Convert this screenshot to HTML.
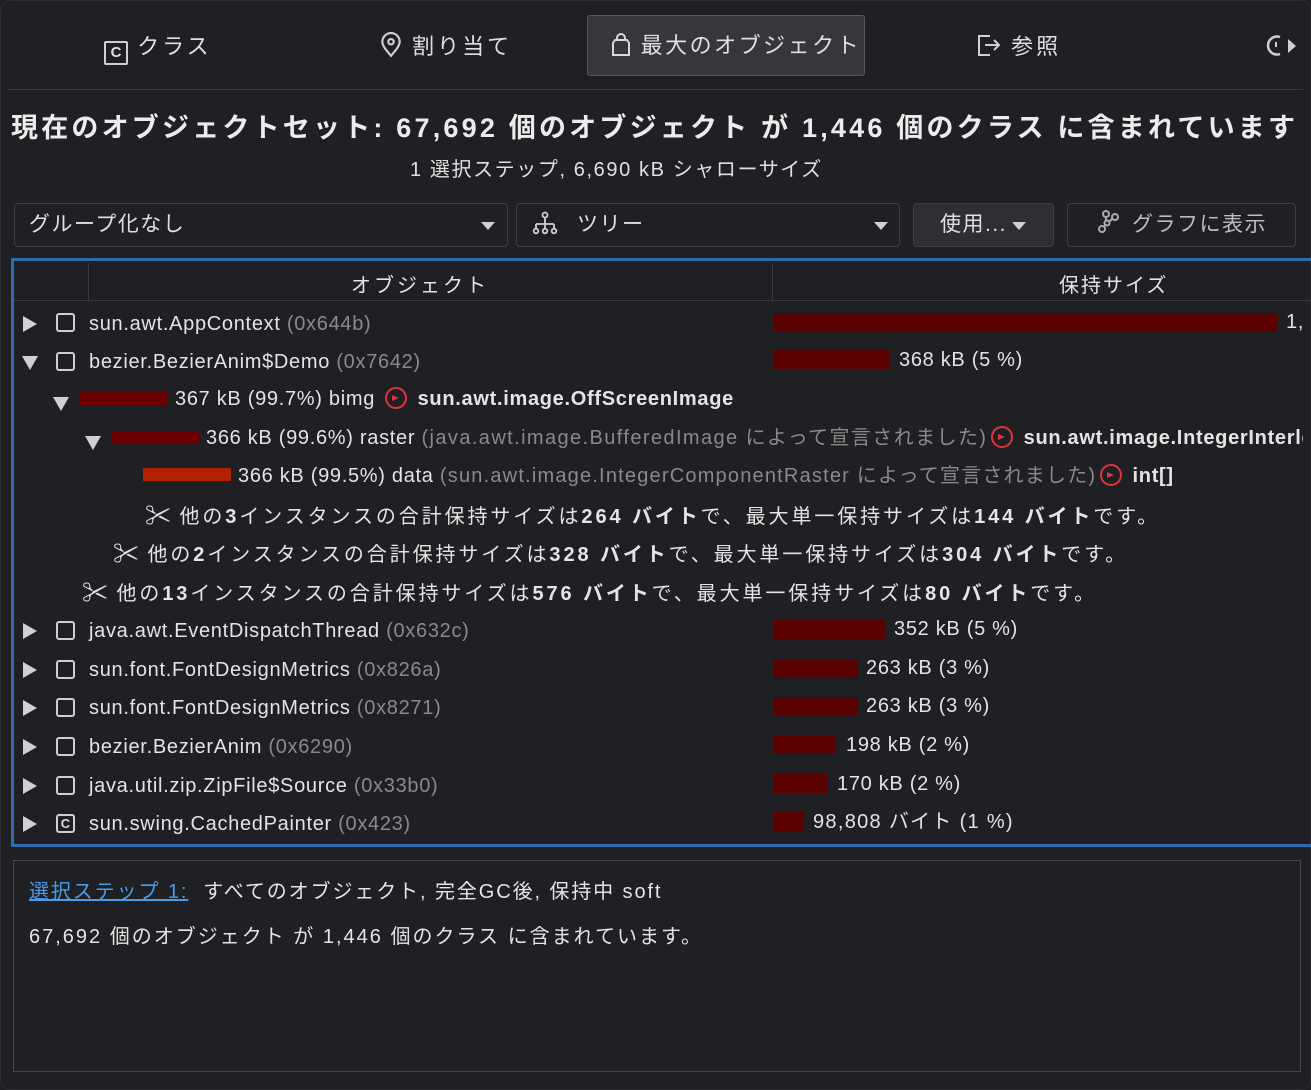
<!DOCTYPE html>
<html><head><meta charset="utf-8"><style>
body{margin:0;width:1311px;height:1090px;background:#1f2023;color:#e4e4e4;font-family:"Liberation Sans","Noto Sans CJK JP",sans-serif;overflow:hidden;position:relative}
.a{position:absolute;white-space:nowrap}
.r{position:absolute;height:38px;line-height:38px;font-size:20px;white-space:nowrap;letter-spacing:0.7px}
.s{letter-spacing:2.9px}
.g{color:#8a8a8a}
.b{font-weight:bold}
.bar{position:absolute;height:19px;background:#5c0000}
.tri{display:inline-block;width:0;height:0}
.cb{position:absolute;width:19px;height:19px;border:2px solid #cfcfcf;border-radius:3px;box-sizing:border-box}
.arr{display:inline-block;width:22px;height:22px;border:2.5px solid #e0343a;border-radius:50%;box-sizing:border-box;vertical-align:-4px;position:relative;margin:0 4px}
.arr:after{content:"";position:absolute;left:5px;top:6px;width:0;height:0;border-left:7px solid #e0343a;border-top:3.5px solid transparent;border-bottom:3.5px solid transparent}
.tab{position:absolute;top:16px;height:62px;line-height:62px;font-size:22px;color:#e0e0e0;letter-spacing:3px}
.btn{position:absolute;top:203px;height:44px;border:1.5px solid #3e3f43;border-radius:4px;box-sizing:border-box;font-size:21px;line-height:41px;color:#e0e0e0;letter-spacing:1.5px}
.dd{position:absolute;top:18px;border-left:7px solid transparent;border-right:7px solid transparent;border-top:8px solid #d0d0d0}
.sc{font-size:26px;vertical-align:-2px;letter-spacing:0}
</style></head><body>
<div class="a" style="left:0;top:0;width:1311px;height:1090px;border:1px solid #2c2d31;border-radius:10px;box-sizing:border-box"></div>
<div class="tab" style="left:104px"><span style="display:inline-block;width:24px;height:24px;border:2px solid #d0d0d0;box-sizing:border-box;font-size:15px;line-height:20px;text-align:center;vertical-align:-3px;font-weight:bold;border-radius:2px;letter-spacing:0">C</span> クラス</div>
<div class="tab" style="left:379px"><svg width="24" height="26" viewBox="0 0 22 24" style="vertical-align:-4px"><path d="M11 22C5 15 3 12 3 9a8 8 0 0 1 16 0c0 3-2 6-8 13z" fill="none" stroke="#d0d0d0" stroke-width="2"/><circle cx="11" cy="9" r="2.5" fill="none" stroke="#d0d0d0" stroke-width="2"/></svg> 割り当て</div>
<div class="a" style="left:587px;top:15px;width:278px;height:61px;background:#36373b;border:1.5px solid #55565a;border-radius:3px;box-sizing:border-box"></div>
<div class="tab" style="left:610px;top:15px;letter-spacing:2.5px"><svg width="22" height="24" viewBox="0 0 22 24" style="vertical-align:-4px"><path d="M3 22V10l2-3h12l2 3v12z M7 7V5a4 4 0 0 1 8 0v2" fill="none" stroke="#d8d8d8" stroke-width="2"/></svg> 最大のオブジェクト</div>
<div class="tab" style="left:976px"><svg width="26" height="26" viewBox="0 0 26 24" style="vertical-align:-4px"><path d="M14 3H3v19h11 M9 12h14 M18 7l5 5-5 5" fill="none" stroke="#d0d0d0" stroke-width="2"/></svg> 参照</div>
<div class="tab" style="left:1262px"><svg width="36" height="26" viewBox="0 0 36 24" style="vertical-align:-4px"><path d="M18 4a9 9 0 1 0 0 17" fill="none" stroke="#d0d0d0" stroke-width="2.5"/><path d="M14 9v5" stroke="#d0d0d0" stroke-width="2"/><path d="M26 6l8 7-8 7z" fill="#d0d0d0"/></svg></div>
<div class="a" style="left:8px;top:89px;width:1295px;height:1px;background:#3a3b3f"></div>
<div class="a b" style="left:11px;top:106px;font-size:27px;letter-spacing:3.2px;color:#ececec">現在のオブジェクトセット: 67,692 個のオブジェクト が 1,446 個のクラス に含まれています</div>
<div class="a" style="left:410px;top:153px;font-size:20px;color:#e0e0e0;letter-spacing:1.6px">1 選択ステップ, 6,690 kB シャローサイズ</div>
<div class="btn" style="left:14px;width:494px"><span style="margin-left:14px">グループ化なし</span><div class="dd" style="left:466px"></div></div>
<div class="btn" style="left:516px;width:384px"><svg width="28" height="24" viewBox="0 0 28 24" style="vertical-align:-4px;margin-left:14px"><circle cx="14" cy="4" r="2.5" fill="none" stroke="#d0d0d0" stroke-width="1.8"/><path d="M14 7v6M5 13h18M5 13v5M14 13v5M23 13v5" stroke="#d0d0d0" stroke-width="1.8" fill="none"/><circle cx="5" cy="20" r="2.3" fill="none" stroke="#d0d0d0" stroke-width="1.8"/><circle cx="14" cy="20" r="2.3" fill="none" stroke="#d0d0d0" stroke-width="1.8"/><circle cx="23" cy="20" r="2.3" fill="none" stroke="#d0d0d0" stroke-width="1.8"/></svg><span style="margin-left:18px">ツリー</span><div class="dd" style="left:357px"></div></div>
<div class="btn" style="left:913px;width:141px;background:#2e2f33"><span style="margin-left:26px">使用...</span><div class="dd" style="left:98px"></div></div>
<div class="btn" style="left:1067px;width:229px"><svg width="28" height="28" viewBox="0 0 28 28" style="vertical-align:-6px;margin-left:26px"><circle cx="8" cy="20" r="3" fill="none" stroke="#aaa" stroke-width="2"/><circle cx="12" cy="5" r="3" fill="none" stroke="#aaa" stroke-width="2"/><circle cx="21" cy="8" r="3" fill="none" stroke="#aaa" stroke-width="2"/><circle cx="13" cy="14" r="2.5" fill="none" stroke="#aaa" stroke-width="2"/><path d="M10 18l2-3M12 8v4M18 10l-3 3" stroke="#aaa" stroke-width="2"/></svg><span style="margin-left:10px;color:#bdbdbd">グラフに表示</span></div>
<div class="a" style="left:11px;top:258px;width:1310px;height:589px;border:3px solid #2e6bb0;border-right:none;box-sizing:border-box;overflow:hidden">
<div class="a" style="left:0;top:39px;width:1310px;height:1px;background:#3a3b3f"></div>
<div class="a" style="left:74px;top:2px;width:1px;height:37px;background:#3a3b3f"></div>
<div class="a" style="left:758px;top:2px;width:1px;height:37px;background:#3a3b3f"></div>
<div class="a" style="left:337px;top:8px;font-size:20px;letter-spacing:3px">オブジェクト</div>
<div class="a" style="left:1045px;top:8px;font-size:20px;letter-spacing:2px">保持サイズ</div>
</div>
<div class="a" style="left:14px;top:302px;width:1289px;height:541px;overflow:hidden">
<div class="r" style="top:3px;left:9px"><span class="tri" style="border-left:14px solid #d0d0d0;border-top:8px solid transparent;border-bottom:8px solid transparent;vertical-align:-2px"></span></div>
<div class="cb" style="left:42px;top:11px"></div>
<div class="r" style="top:3px;left:75px">sun.awt.AppContext <span class="g">(0x644b)</span></div>
<div class="bar" style="left:760px;top:11px;width:503px"></div>
<div class="r" style="top:1px;left:1272px">1,</div>

<div class="r" style="top:41px;left:8px"><span class="tri" style="border-top:14px solid #d0d0d0;border-left:8px solid transparent;border-right:8px solid transparent;vertical-align:-2px"></span></div>
<div class="cb" style="left:42px;top:50px"></div>
<div class="r" style="top:41px;left:75px">bezier.BezierAnim$Demo <span class="g">(0x7642)</span></div>
<div class="bar" style="left:760px;top:48px;width:115px"></div>
<div class="r" style="top:39px;left:885px">368 kB (5 %)</div>

<div class="r" style="top:78px;left:39px"><span class="tri" style="border-top:14px solid #d0d0d0;border-left:8px solid transparent;border-right:8px solid transparent;vertical-align:-6px"></span></div>
<div class="bar" style="left:66px;top:90px;width:88px;height:13px;background:#6a0000"></div>
<div class="r" style="top:78px;left:161px">367 kB (99.7%) bimg <span class="arr"></span> <span class="b">sun.awt.image.OffScreenImage</span></div>

<div class="r" style="top:117px;left:71px"><span class="tri" style="border-top:14px solid #d0d0d0;border-left:8px solid transparent;border-right:8px solid transparent;vertical-align:-6px"></span></div>
<div class="bar" style="left:98px;top:129px;width:88px;height:13px;background:#6a0000"></div>
<div class="r" style="top:117px;left:192px">366 kB (99.6%) raster <span class="g" style="letter-spacing:1.4px">(java.awt.image.BufferedImage によって宣言されました)</span><span class="arr"></span> <span class="b">sun.awt.image.IntegerInterleavedRaster</span></div>

<div class="bar" style="left:129px;top:166px;width:88px;height:13px;background:#b02200"></div>
<div class="r" style="top:155px;left:224px">366 kB (99.5%) data <span class="g" style="letter-spacing:1.2px">(sun.awt.image.IntegerComponentRaster によって宣言されました)</span><span class="arr"></span> <span class="b">int[]</span></div>

<div class="r s" style="top:195px;left:131px"><span class="sc">✂</span> 他の<b>3</b>インスタンスの合計保持サイズは<b>264 バイト</b>で、最大単一保持サイズは<b>144 バイト</b>です。</div>
<div class="r s" style="top:233px;left:99px"><span class="sc">✂</span> 他の<b>2</b>インスタンスの合計保持サイズは<b>328 バイト</b>で、最大単一保持サイズは<b>304 バイト</b>です。</div>
<div class="r s" style="top:272px;left:68px"><span class="sc">✂</span> 他の<b>13</b>インスタンスの合計保持サイズは<b>576 バイト</b>で、最大単一保持サイズは<b>80 バイト</b>です。</div>

<div class="r" style="top:310px;left:9px"><span class="tri" style="border-left:14px solid #d0d0d0;border-top:8px solid transparent;border-bottom:8px solid transparent;vertical-align:-2px"></span></div>
<div class="cb" style="left:42px;top:319px"></div>
<div class="r" style="top:310px;left:75px">java.awt.EventDispatchThread <span class="g">(0x632c)</span></div>
<div class="bar" style="left:760px;top:318px;width:111px"></div>
<div class="r" style="top:308px;left:880px">352 kB (5 %)</div>

<div class="r" style="top:349px;left:9px"><span class="tri" style="border-left:14px solid #d0d0d0;border-top:8px solid transparent;border-bottom:8px solid transparent;vertical-align:-2px"></span></div>
<div class="cb" style="left:42px;top:358px"></div>
<div class="r" style="top:349px;left:75px">sun.font.FontDesignMetrics <span class="g">(0x826a)</span></div>
<div class="bar" style="left:760px;top:357px;width:84px"></div>
<div class="r" style="top:347px;left:852px">263 kB (3 %)</div>

<div class="r" style="top:387px;left:9px"><span class="tri" style="border-left:14px solid #d0d0d0;border-top:8px solid transparent;border-bottom:8px solid transparent;vertical-align:-2px"></span></div>
<div class="cb" style="left:42px;top:396px"></div>
<div class="r" style="top:387px;left:75px">sun.font.FontDesignMetrics <span class="g">(0x8271)</span></div>
<div class="bar" style="left:760px;top:395px;width:84px"></div>
<div class="r" style="top:385px;left:852px">263 kB (3 %)</div>

<div class="r" style="top:426px;left:9px"><span class="tri" style="border-left:14px solid #d0d0d0;border-top:8px solid transparent;border-bottom:8px solid transparent;vertical-align:-2px"></span></div>
<div class="cb" style="left:42px;top:435px"></div>
<div class="r" style="top:426px;left:75px">bezier.BezierAnim <span class="g">(0x6290)</span></div>
<div class="bar" style="left:760px;top:433px;width:62px"></div>
<div class="r" style="top:424px;left:832px">198 kB (2 %)</div>

<div class="r" style="top:465px;left:9px"><span class="tri" style="border-left:14px solid #d0d0d0;border-top:8px solid transparent;border-bottom:8px solid transparent;vertical-align:-2px"></span></div>
<div class="cb" style="left:42px;top:474px"></div>
<div class="r" style="top:465px;left:75px">java.util.zip.ZipFile$Source <span class="g">(0x33b0)</span></div>
<div class="bar" style="left:760px;top:472px;width:54px"></div>
<div class="r" style="top:463px;left:823px">170 kB (2 %)</div>

<div class="r" style="top:503px;left:9px"><span class="tri" style="border-left:14px solid #d0d0d0;border-top:8px solid transparent;border-bottom:8px solid transparent;vertical-align:-2px"></span></div>
<div class="cb" style="left:42px;top:512px;font-size:13px;line-height:15px;text-align:center;font-weight:bold;color:#ddd;letter-spacing:0">C</div>
<div class="r" style="top:503px;left:75px">sun.swing.CachedPainter <span class="g">(0x423)</span></div>
<div class="bar" style="left:760px;top:510px;width:30px"></div>
<div class="r" style="top:501px;left:799px;letter-spacing:1.3px">98,808 バイト (1 %)</div>
</div>
<div class="a" style="left:13px;top:860px;width:1288px;height:212px;border:1.5px solid #47484c;box-sizing:border-box"></div>
<div class="a" style="left:29px;top:875px;font-size:20px;letter-spacing:1.9px"><span style="color:#4a9be8;text-decoration:underline">選択ステップ 1:</span>&nbsp; すべてのオブジェクト, 完全GC後, 保持中 soft</div>
<div class="a" style="left:29px;top:920px;font-size:20px;letter-spacing:2px">67,692 個のオブジェクト が 1,446 個のクラス に含まれています。</div>
</body></html>
